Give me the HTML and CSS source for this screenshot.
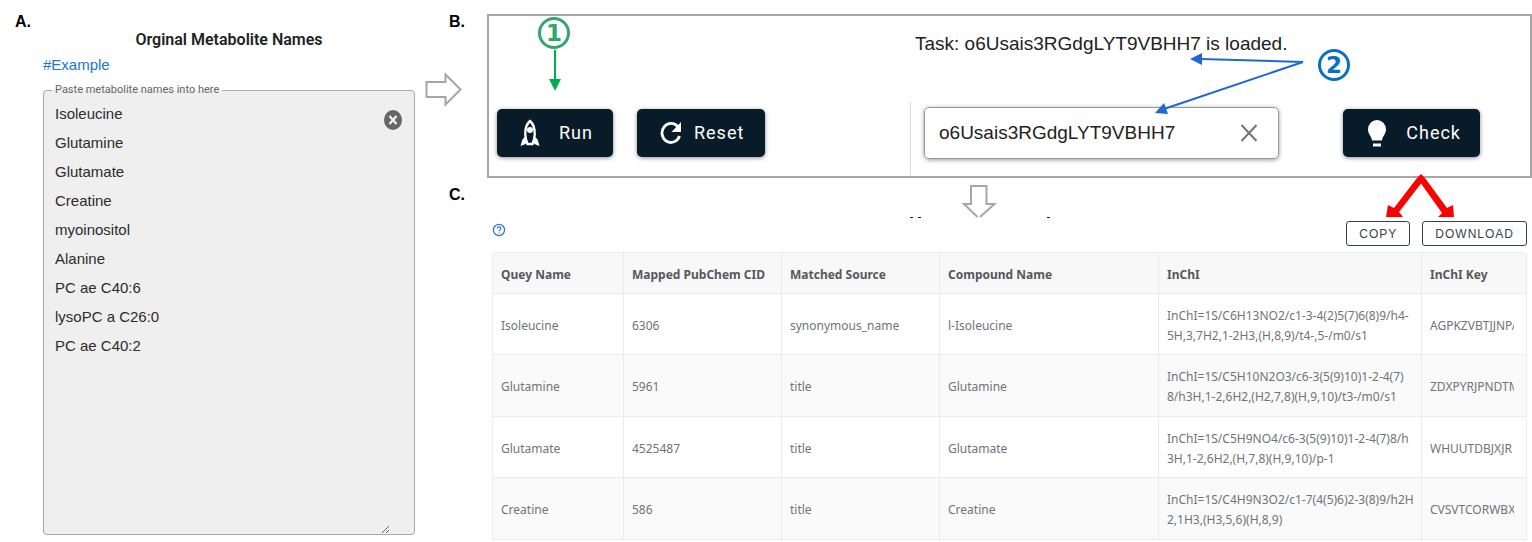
FILE: index.html
```html
<!DOCTYPE html>
<html lang="en">
<head>
<meta charset="utf-8">
<title>Metabolite name mapping</title>
<link rel="stylesheet" href="styles.css">
</head>
<body>
<main class="page">
  <section class="names">
    <span class="tag">A.</span>
    <div class="names-body">
      <h2 class="names-title">Orginal Metabolite Names</h2>
      <a class="example" href="#example">#Example</a>
      <fieldset class="names-field">
        <legend><label for="names">Paste metabolite names into here</label></legend>
        <textarea id="names" class="names-input" spellcheck="false">Isoleucine
Glutamine
Glutamate
Creatine
myoinositol
Alanine
PC ae C40:6
lysoPC a C26:0
PC ae C40:2</textarea>
        <button class="clear" type="button" aria-label="Clear names">
          <svg width="20" height="20" viewBox="0 0 20 20"><ellipse cx="10" cy="10" rx="9" ry="10" fill="#666"/><path d="M6.5 6L13.5 14M13.5 6L6.5 14" stroke="#f4f4f4" stroke-width="2.2"/></svg>
        </button>
      </fieldset>
    </div>
  </section>

  <div class="step step-b">
    <span class="tag">B.</span>
    <svg class="step-arrow" width="37" height="36" viewBox="0 0 37 36"><path d="M1.5 10H20.500V2.500L35.500 17.500L20.500 32.500V25H1.500Z" fill="#fff" stroke="#a6a6a6" stroke-width="2"/></svg>
  </div>

  <section class="task">
    <div class="task-actions">
      <div class="mark mark-one">
        <span class="circle green">1</span>
        <svg width="14" height="43" viewBox="0 0 14 43"><path d="M8 1V31" stroke="#00b050" stroke-width="2"/><path d="M2 30H14L8 42Z" fill="#00b050"/></svg>
      </div>
      <button class="btn run" type="button">
        <svg width="20" height="28" viewBox="0 0 20 28" fill="none" stroke="#fff"><path d="M10 2C6.500 5 5 10 5.300 16C5.500 19.500 6.500 22.500 7.500 25H12.500C13.500 22.500 14.500 19.500 14.700 16C15 10 13.500 5 10 2Z" stroke-width="2.400"/><circle cx="10" cy="11" r="3" fill="#fff" stroke="none"/><path d="M4.500 18L2.200 21L0.500 27L4.500 25.500L6.500 24ZM15.500 18L17.800 21L19.500 27L15.500 25.500L13.500 24Z" fill="#fff" stroke="none"/></svg>
        Run
      </button>
      <button class="btn reset" type="button">
        <svg width="22" height="24" viewBox="0 0 22 24"><path d="M18 6A9 9.500 0 1 0 19.500 15" fill="none" stroke="#fff" stroke-width="2.800"/><path d="M21 1V11H11.500Z" fill="#fff"/></svg>
        Reset
      </button>
    </div>
    <div class="task-check">
      <p class="task-status">Task: o6Usais3RGdgLYT9VBHH7 is loaded.</p>
      <div class="task-row">
        <div class="task-field">
          <input class="task-input" type="text" value="o6Usais3RGdgLYT9VBHH7" aria-label="Task ID" spellcheck="false">
          <button class="task-clear" type="button" aria-label="Clear task">
            <svg width="18" height="18" viewBox="0 0 18 18"><path d="M1.500 1L16.500 17M16.500 1L1.500 17" stroke="#757575" stroke-width="2"/></svg>
          </button>
        </div>
        <button class="btn check" type="button">
          <svg width="20" height="27" viewBox="0 0 20 27" fill="#fff"><path d="M10 0A9 9.500 0 0 0 1 9.500C1 14 4.500 16 5 20.500H15C15.500 16 19 14 19 9.500A9 9.500 0 0 0 10 0Z"/><path d="M6 23.500H14V26.500H6Z"/></svg>
          Check
        </button>
      </div>
      <svg class="pointers" width="470" height="110" viewBox="0 0 470 110"><path d="M291 43L393 46L254 93" fill="none" stroke="#1f68d4" stroke-width="2"/><path d="M280 43L292 37V49Z" fill="#1f68d4"/><path d="M245 97L254 87L258 98Z" fill="#1f68d4"/></svg>
      <span class="circle blue">2</span>
    </div>
    <svg class="forks" width="70" height="43" viewBox="0 0 70 43"><path d="M35 0L39 4L61 34L67 31L68 43H52L56 39L35 9.500L13 38L17 43H0L2 31L8 34L31 4Z" fill="#f00"/></svg>
  </section>

  <div class="step step-c">
    <span class="tag">C.</span>
  </div>

  <section class="results">
    <svg class="down-arrow" width="140" height="34" viewBox="0 0 140 34"><path d="M67.500 32L54 19H61V1H76.500V19H84.500L70 32" fill="#fff" stroke="#a6a6a6" stroke-width="2"/><path d="M0 32.500H3M8 32.500H11M137 32.500H140" stroke="#222"/></svg>
    <div class="toolbar">
      <button class="help" type="button" aria-label="Help">
        <svg width="14" height="14" viewBox="0 0 14 14" fill="none" stroke="#2f77d6"><circle cx="7" cy="7" r="5.600" stroke-width="1.300"/><path d="M5.200 5.600C5.200 3.400 8.800 3.400 8.800 5.600C8.800 6.900 7 6.900 7 8.300M7 9.400V10.600" stroke-width="1.200"/></svg>
      </button>
      <button class="outline" type="button">COPY</button>
      <button class="outline" type="button">DOWNLOAD</button>
    </div>
    <div class="table-wrap">
      <table>
        <colgroup><col class="c-name"><col class="c-cid"><col class="c-source"><col class="c-compound"><col class="c-inchi"><col class="c-key"></colgroup>
        <thead>
          <tr><th>Quey Name</th><th>Mapped PubChem CID</th><th>Matched Source</th><th>Compound Name</th><th>InChI</th><th>InChI Key</th></tr>
        </thead>
        <tbody>
          <tr><td>Isoleucine</td><td>6306</td><td>synonymous_name</td><td>l-Isoleucine</td><td>InChI=1S/C6H13NO2/c1-3-4(2)5(7)6(8)9/h4-<br>5H,3,7H2,1-2H3,(H,8,9)/t4-,5-/m0/s1</td><td><div class="key">AGPKZVBTJJNPA</div></td></tr>
          <tr><td>Glutamine</td><td>5961</td><td>title</td><td>Glutamine</td><td>InChI=1S/C5H10N2O3/c6-3(5(9)10)1-2-4(7)<br>8/h3H,1-2,6H2,(H2,7,8)(H,9,10)/t3-/m0/s1</td><td><div class="key">ZDXPYRJPNDTM</div></td></tr>
          <tr><td>Glutamate</td><td>4525487</td><td>title</td><td>Glutamate</td><td>InChI=1S/C5H9NO4/c6-3(5(9)10)1-2-4(7)8/h<br>3H,1-2,6H2,(H,7,8)(H,9,10)/p-1</td><td><div class="key">WHUUTDBJXJR</div></td></tr>
          <tr><td>Creatine</td><td>586</td><td>title</td><td>Creatine</td><td>InChI=1S/C4H9N3O2/c1-7(4(5)6)2-3(8)9/h2H<br>2,1H3,(H3,5,6)(H,8,9)</td><td><div class="key">CVSVTCORWBX</div></td></tr>
        </tbody>
      </table>
    </div>
  </section>
</main>
</body>
</html>
```
FILE: styles.css
```css
* { box-sizing: border-box; }

body {
  margin: 0;
  background: #fff;
  color: #222;
  font-family: "Liberation Sans", Arial, sans-serif;
  overflow: hidden;
}

button { font: inherit; cursor: pointer; }
svg { display: block; flex: none; }

.page {
  display: grid;
  grid-template-columns: 415fr 72fr 1045fr;
  grid-template-rows: auto 1fr;
  min-height: 100vh;
}

.tag {
  color: #000;
  font-size: 16px;
  font-weight: 700;
  line-height: 20px;
}

/* Name list */
.names {
  grid-row: 1 / 3;
  display: grid;
  grid-template-columns: 28px 1fr;
  padding: 12px 0 7px 15px;
}

.names-body {
  display: flex;
  flex-direction: column;
  padding-top: 16px;
}

.names-title {
  margin: 0;
  font: 600 16px/24px Roboto, sans-serif;
  text-align: center;
}

.example {
  align-self: flex-start;
  margin-top: 1px;
  color: #1976d2;
  font-size: 15px;
  line-height: 24px;
  text-decoration: none;
}

.names-field {
  position: relative;
  flex: 1;
  display: flex;
  min-width: 0;
  margin: 5px 0 0;
  padding: 0 24px 0 0;
  border: 1px solid #aaa;
  border-radius: 4px;
  background: #efefef;
}

.names-field legend {
  margin-left: 8px;
  padding: 0 3px;
  color: #666;
  font: 11px/16px Roboto, sans-serif;
}

.names-input {
  display: block;
  width: 100%;
  height: 100%;
  padding: 1px 11px;
  border: 0;
  outline: 0;
  background: transparent;
  color: #2c2c2c;
  font: 15px/29px "Liberation Sans", Arial, sans-serif;
  resize: vertical;
}

.clear {
  position: absolute;
  top: 12px;
  right: 11px;
  padding: 0;
  border: 0;
  background: none;
}

/* Step markers */
.step { padding: 12px 22px 0 0; text-align: right; }
.step-arrow { margin: 40px 3px 0 auto; }
.step-c { padding-top: 7px; }

/* Task panel */
.task {
  position: relative;
  display: grid;
  grid-template-columns: 421fr 620fr;
  margin-top: 14px;
  border: 2px solid #a6a6a6;
}

.task-actions {
  position: relative;
  display: flex;
  align-items: flex-end;
  gap: 24px;
  padding: 0 8px 19px;
}

.btn {
  display: flex;
  align-items: center;
  height: 48px;
  padding: 0 21px;
  border: 0;
  border-radius: 5px;
  background: #081b29;
  box-shadow: 0 1px 4px rgba(0, 0, 0, .45);
  color: #fff;
  font: 400 18px/24px Roboto, sans-serif;
  letter-spacing: 1px;
}

.run { gap: 19px; padding: 0 20px 0 23px; }
.reset { gap: 12px; padding-left: 23px; }
.check { gap: 19px; padding: 0 19px 0 24px; }

.mark {
  position: absolute;
  top: 1px;
  left: 49px;
  display: flex;
  flex-direction: column;
  align-items: center;
}

.circle {
  width: 32px;
  height: 32px;
  border: 3px solid;
  border-radius: 50%;
  font: 700 23px/26px "DejaVu Sans", sans-serif;
  text-align: center;
}

.green { color: #33a56f; }
.blue { position: absolute; top: 33px; left: 408px; color: #0b6fc2; }

.task-check {
  position: relative;
  display: flex;
  flex-direction: column;
}

.task-status {
  margin: 0;
  padding: 14px 0 44px 5px;
  font-size: 19px;
  line-height: 28px;
}

.task-row {
  display: flex;
  align-items: center;
  justify-content: space-between;
  padding: 5px 50px 16px 13px;
  margin-bottom: 1px;
  border-left: 1px solid #ddd;
}

.task-field {
  flex: 0 1 355px;
  display: flex;
  align-items: center;
  height: 52px;
  padding: 0 20px 0 14px;
  border: 1px solid #999;
  border-radius: 5px;
  box-shadow: 0 1px 4px rgba(0, 0, 0, .4);
}

.task-input {
  flex: 1;
  min-width: 0;
  padding: 0;
  border: 0;
  outline: 0;
  background: none;
  color: #222;
  font: 19px/28px "Liberation Sans", Arial, sans-serif;
}

.task-clear { padding: 0; border: 0; background: none; }
.pointers { position: absolute; top: 0; left: 0; pointer-events: none; }
.forks { position: absolute; top: 158px; right: 74px; }

/* Results */
.results {
  position: relative;
  min-width: 0;
  padding: 43px 5px 0 5px;
}

.down-arrow { position: absolute; top: 7px; left: 423px; }

.toolbar {
  display: flex;
  align-items: center;
  gap: 12px;
  padding-bottom: 6px;
}

.help {
  align-self: flex-start;
  margin-right: auto;
  padding: 2px 0;
  border: 0;
  background: none;
}

.outline {
  height: 25px;
  padding: 0 12px;
  border: 1px solid #34444f;
  border-radius: 3px;
  background: #fff;
  color: #34444f;
  font: 400 12px/16px "Liberation Sans", Arial, sans-serif;
  letter-spacing: 1px;
}

.table-wrap {
  border: 1px solid #ebeef0;
  border-bottom: 0;
  border-radius: 3px 3px 0 0;
  overflow: hidden;
}

table {
  width: 100%;
  border-collapse: separate;
  border-spacing: 0;
  table-layout: fixed;
  font-family: "Noto Sans", sans-serif;
  font-size: 12px;
  line-height: 20px;
}

.c-name { width: 131px; }
.c-cid { width: 158px; }
.c-source { width: 158px; }
.c-compound { width: 219px; }
.c-inchi { width: 263px; }

th, td {
  padding: 12px 0 8px 8px;
  border-right: 1px solid #ebebeb;
  border-bottom: 1px solid #ebebeb;
  text-align: left;
  white-space: nowrap;
}

th { background: #f8f8f8; color: #55585c; font-weight: 700; }
td { color: #707478; }
th:last-child, td:last-child { border-right: 0; }
tbody tr:nth-child(even) td { padding-bottom: 9px; background: #fafafa; }
td:last-child { padding-right: 12px; }
.key { overflow: hidden; }
```
